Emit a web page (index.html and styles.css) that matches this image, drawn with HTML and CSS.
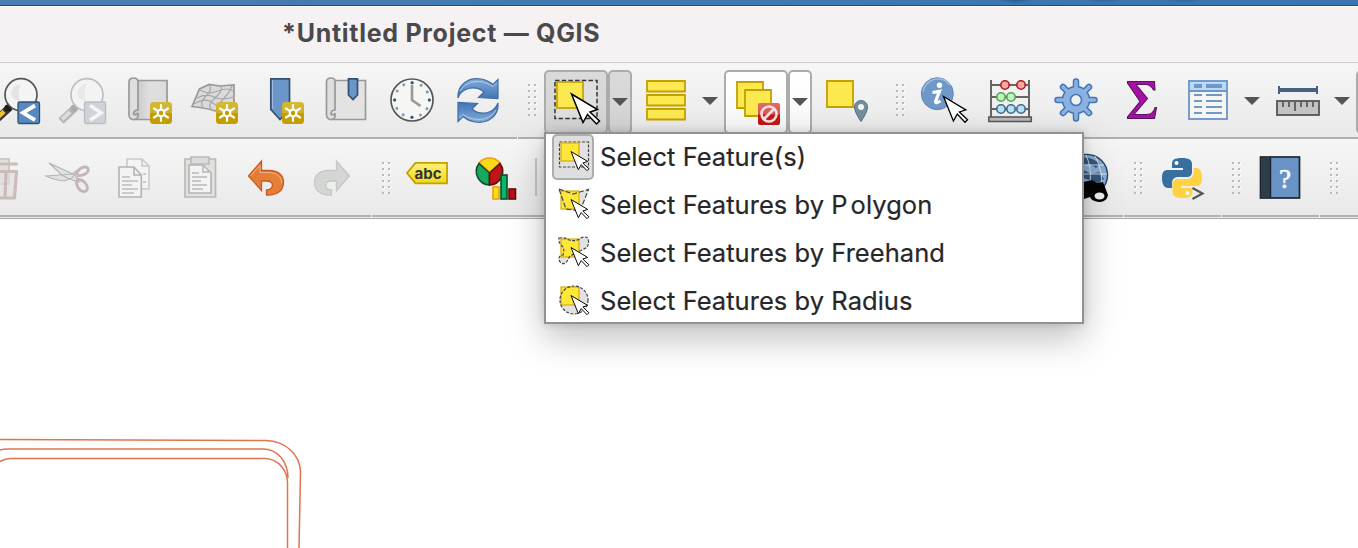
FILE: index.html
```html
<!DOCTYPE html>
<html lang="en">
<head>
<meta charset="utf-8">
<title>*Untitled Project — QGIS</title>
<link rel="stylesheet" href="styles.css">
</head>
<body>
<svg class="defs" width="0" height="0" aria-hidden="true">
  <defs>
    <linearGradient id="gold" x1="0" y1="0" x2="0" y2="1"><stop offset="0" stop-color="#d5b936"/><stop offset=".48" stop-color="#ceb02a"/><stop offset=".52" stop-color="#c29e00"/><stop offset="1" stop-color="#c29e00"/></linearGradient>
    <linearGradient id="red" x1="0" y1="0" x2="0" y2="1"><stop offset="0" stop-color="#e46a6a"/><stop offset=".48" stop-color="#dc5555"/><stop offset=".55" stop-color="#c81616"/><stop offset="1" stop-color="#c81616"/></linearGradient>
    <linearGradient id="blue" x1="0" y1="0" x2="0" y2="1"><stop offset="0" stop-color="#86abd5"/><stop offset="1" stop-color="#3f74b8"/></linearGradient>
    <linearGradient id="paper" x1="0" y1="0" x2="1" y2="0"><stop offset="0" stop-color="#c4c4c4"/><stop offset=".5" stop-color="#dfdfdf"/><stop offset="1" stop-color="#dcdcdc"/></linearGradient>
    <linearGradient id="orange" x1="0" y1="0" x2="1" y2="1"><stop offset="0" stop-color="#e07b35"/><stop offset="1" stop-color="#e8803a"/></linearGradient>
    <linearGradient id="tag" x1="0" y1="0" x2="0" y2="1"><stop offset="0" stop-color="#fdf27a"/><stop offset="1" stop-color="#f0da1c"/></linearGradient>
    <g id="cursor"><path d="M0 0 26 15.500 18.500 18 28 27 25 30 16 20.500 11.500 28.500Z" fill="#fff" stroke="#000" stroke-width="1.500"/></g>
    <g id="badge"><rect x="-11" y="-11" width="22" height="22" rx="3.500" fill="url(#gold)"/><g stroke="#fff" stroke-width="2.200" stroke-linecap="round"><path d="M0-8V8M-7-4.500 7 4.500M-7 4.500 7-4.500"/></g><circle r="3.300" fill="#c29e00" stroke="#fff" stroke-width="2.200"/></g>
    <g id="roll"><path d="M8 2.500H38.500V41.500H4" fill="url(#paper)" stroke="#999" stroke-width="1.700"/><path d="M.5 37V4Q.5 0 5 0T9.500 4V32Q5 32 5 36 8 38 9.500 35V38Q9 41.500 5 41.500T.5 37Z" fill="#dedede" stroke="#999" stroke-width="1.700"/></g>
  </defs>
</svg>

<div class="desktop"></div>
<header class="titlebar"><h1>*Untitled Project — QGIS</h1></header>

<nav class="toolbar first">
  <svg class="w49" viewBox="0 63 49 74">
    <path d="M10 107-3 119" stroke="#333" stroke-width="7.500"/><path d="M4 111.500-4 119" stroke="#f5bd2d" stroke-width="4.500"/><circle cx="8" cy="108" r="3.600" fill="#1c1c1c"/>
    <circle cx="21" cy="94.700" r="16" fill="#f4f4f4" stroke="#555" stroke-width="1.700"/><path d="M11 94a10 10 0 0 1 10-10q-4 7-1 17-7 0-9-7Z" fill="#e4e4e4"/>
    <rect x="18" y="102" width="21.500" height="21.500" rx="1.500" fill="#5888c1" stroke="#31506f" stroke-width="1.300"/><path d="M35 105.500 23 112.700 35 120.200" fill="none" stroke="#fff" stroke-width="3.800"/>
  </svg>
  <svg class="w66" viewBox="49 63 66 74">
    <path d="M76 107 61 121" stroke="#b5b5b5" stroke-width="7.500"/><path d="M70 112 62 119.500" stroke="#dfdcd5" stroke-width="4"/><circle cx="74" cy="108" r="3.200" fill="#aaa"/>
    <circle cx="87" cy="94.700" r="16" fill="#f3f3f3" stroke="#bebebe" stroke-width="1.700"/><path d="M77 94a10 10 0 0 1 10-10q-4 7-1 17-7 0-9-7Z" fill="#e8e8e8"/>
    <rect x="84.500" y="102" width="21" height="21.500" rx="1.500" fill="#ced3d9" stroke="#babec3" stroke-width="1.300"/><path d="M90 105.500 101 112.700 90 120.200" fill="none" stroke="#f5f5f5" stroke-width="3.800"/>
  </svg>
  <svg class="w66" viewBox="115 63 66 74"><use href="#roll" x="128.500" y="78"/><use href="#badge" x="161" y="113"/></svg>
  <svg class="w66" viewBox="181 63 66 74">
    <path d="M192 106.500 199.500 89 209 84.500 220 86 234 85V110L222 113Q208 108 192 106.500Z" fill="#dadada" stroke="#999" stroke-width="1.700"/>
    <path d="M197 98Q206 93 214 97T233 97M194 104Q206 97 213 103T226 106M200 90Q209 95 218 91T233 91M209 85Q213 89 206 96T203 107M221 86Q223 91 215 98T211 109M232 86Q230 92 224 98T221 110" fill="none" stroke="#a6a6a6" stroke-width="1.200"/>
    <use href="#badge" x="227" y="113"/>
  </svg>
  <svg class="w66" viewBox="247 63 66 74"><path d="M270.800 78.800H289.500V109.500L280 119.500 270.800 109.500Z" fill="#6b96c7" stroke="#33516f" stroke-width="1.700"/><path d="M272.500 80V109" stroke="#9dbbe0"/><use href="#badge" x="293" y="113"/></svg>
  <svg class="w66" viewBox="313 63 66 74"><path d="M335 80.500H365.500V119.500H330" fill="#e3e3e3" stroke="#999" stroke-width="1.700"/><path d="M326.500 115V82Q326.500 78 331 78T335 82V110Q331 110 331 114 334 116 335 113V116Q335 119.500 331 119.500T326.500 115Z" fill="#dedede" stroke="#999" stroke-width="1.700"/><path d="M348.500 78.800H357.500V95L353 99.500 348.500 95Z" fill="#6b96c7" stroke="#33516f" stroke-width="1.700"/></svg>
  <svg class="w66" viewBox="379 63 66 74">
    <circle cx="412" cy="100" r="21" fill="#f6f6f3" stroke="#555" stroke-width="1.700"/>
    <circle cx="412" cy="100" r="17.300" fill="none" stroke="#7b9ccb" stroke-width="3" stroke-linecap="round" stroke-dasharray=".01 9.048"/>
    <g fill="#36527c"><circle cx="412" cy="82.700" r="1.500"/><circle cx="429.300" cy="100" r="1.500"/><circle cx="412" cy="117.300" r="1.500"/><circle cx="394.700" cy="100" r="1.500"/></g>
    <path d="M412 85V100L420.500 106" fill="none" stroke="#999" stroke-width="2.600"/>
  </svg>
  <svg class="w66" viewBox="445 63 66 74">
    <g id="sync"><path d="M458 98C457 85 468 77 481 79 487 80 490 82 493 84.500L498 79.500V98.500L478.500 97.500 484 92C476 85 462 87 458 98Z" fill="url(#blue)" stroke="#3d6da8" stroke-width="1.200"/><path d="M460 91C466 81 480 78 493 86.500L496.500 83" fill="none" stroke="#b7cde8" stroke-width="1"/></g>
    <use href="#sync" transform="rotate(180 478 100.500)"/>
  </svg>
  <svg class="w33" viewBox="511 63 33 74"><g id="grip"><path d="M530 85V116M536 85V116" stroke="#fff" stroke-width="2" stroke-dasharray="2 4"/><path d="M529 84V116M535 84V116" stroke="#b9b9b9" stroke-width="2" stroke-dasharray="2 4"/></g></svg>

  <button class="tool pressed main"><svg viewBox="546 72 60 58">
    <rect x="555" y="79.500" width="42" height="38" fill="#dfdfdf" stroke="#333" stroke-width="1.500" stroke-dasharray="4.500 2.200"/><rect x="557" y="81" width="26" height="26" fill="#fce94f" stroke="#c4a000" stroke-width="1.700"/><use href="#cursor" x="571.500" y="93"/></svg></button>
  <button class="tool pressed drop"><i class="caret"></i></button>
  <svg class="w66" viewBox="632 63 66 74"><path d="M647 81H685V91.500H647ZM647 95H685V105.500H647ZM647 109H685V119.500H647Z" fill="#fce94f" stroke="#c4a000" stroke-width="1.800"/></svg>
  <span class="plain-drop near"><i class="caret"></i></span>
  <button class="tool main"><svg viewBox="726 72 60 58">
    <g fill="#fce94f" stroke="#c4a000" stroke-width="1.800"><path d="M737 81H763V107H737Z"/><path d="M745 89H771V115H745Z"/></g>
    <rect x="758" y="102" width="22" height="22" rx="2" fill="url(#red)"/><path d="M764 118 774 108" stroke="#fae3e3" stroke-width="2.800"/><circle cx="769" cy="113" r="7.500" fill="none" stroke="#fae3e3" stroke-width="2.600"/></svg></button>
  <button class="tool drop"><i class="caret"></i></button>
  <svg class="w66" viewBox="812 63 66 74"><path d="M827 81H853V107H827Z" fill="#fce94f" stroke="#c4a000" stroke-width="1.800"/><path d="M861 121.500Q854.500 112 854.500 107A6.500 6.500 0 0 1 867.500 107Q867.500 112 861 121.500Z" fill="#728f9e" stroke="#566f7c"/><circle cx="861" cy="107" r="3" fill="#f4f4f4"/></svg>
  <svg class="w32" viewBox="510 63 32 74"><use href="#grip"/></svg>
  <svg class="w66" viewBox="910 63 66 74">
    <circle cx="937.300" cy="93.700" r="16" fill="#6f98c9" stroke="#6089bb"/><path d="M923 92A15 15 0 0 1 950 85" fill="none" stroke="#a5c0e1" stroke-width="1.300"/>
    <circle cx="939.500" cy="85.300" r="2.700" fill="#fff"/><path d="M932.500 92.500 939.500 91.300 935.500 101.500Q935.500 104 940.500 101" fill="none" stroke="#fff" stroke-width="3.200"/>
    <use href="#cursor" transform="translate(943.500 96.500) scale(.86)"/>
  </svg>
  <svg class="w66" viewBox="976 63 66 74">
    <path d="M991 80V117M1029 80V117M991 85H1029M991 97H1029M991 109H1029" stroke="#666" stroke-width="2"/><rect x="988.800" y="117" width="42.500" height="4.500" fill="#b9b9b9" stroke="#555" stroke-width="1.500"/>
    <g stroke-width="1.600"><g fill="#ffa6a6" stroke="#b01c1c"><circle cx="1005" cy="85" r="4.200"/><circle cx="1021" cy="85" r="4.200"/></g><g fill="#bdf5bd" stroke="#55a055"><circle cx="1001" cy="97" r="4.200"/><circle cx="1011" cy="97" r="4.200"/></g><g fill="#b9e2fa" stroke="#3f6a86"><circle cx="1001" cy="109" r="4.200"/><circle cx="1011" cy="109" r="4.200"/><circle cx="1021" cy="109" r="4.200"/></g></g>
  </svg>
  <svg class="w66" viewBox="1042 63 66 74"><g transform="translate(1076 100)">
    <path d="M0-18.500V18.500M-18.500 0H18.500M-13-13 13 13M-13 13 13-13" stroke="#3f76bc" stroke-width="6.500" stroke-linecap="round"/><circle r="13.500" fill="#8db1de" stroke="#3f76bc" stroke-width="1.600"/>
    <path d="M0-18.500V18.500M-18.500 0H18.500M-13-13 13 13M-13 13 13-13" stroke="#8db1de" stroke-width="3.600" stroke-linecap="round"/><circle r="5.500" fill="#f1f1f1" stroke="#3f76bc" stroke-width="1.600"/></g></svg>
  <svg class="w66" viewBox="1108 63 66 74"><path d="M1127.500 81.500H1154.500L1155 90H1153.500Q1151 84.500 1145 84.500H1136L1147.500 98.500 1134 114.500H1147Q1153.500 114 1155 107.500H1156.500L1154.500 118.500H1127.500V117L1140 101.500 1127.500 83Z" fill="#a70fa7" stroke="#55165a" stroke-width="1.100"/></svg>
  <svg class="w66" viewBox="1174 63 66 74"><rect x="1189" y="81" width="38" height="38" fill="#f5f5f3" stroke="#6f98c9" stroke-width="1.900"/><path d="M1190 82H1226V90H1190Z" fill="#b9dcf4"/><path d="M1189 91H1227M1194 95H1202M1206 95H1222M1194 101H1202M1206 101H1222M1194 107H1202M1206 107H1222M1194 113H1202M1206 113H1222" stroke="#6f98c9" stroke-width="1.800"/><path d="M1194 86H1202M1206 86H1222" stroke="#6f98c9" stroke-width="4"/></svg>
  <span class="plain-drop wide"><i class="caret"></i></span>
  <svg class="w66" viewBox="1264 63 66 74"><path d="M1278 90H1318" stroke="#46617f" stroke-width="4"/><path d="M1279 86V94M1317 86V94" stroke="#46617f" stroke-width="2"/><rect x="1277" y="101" width="42" height="14" fill="#c3c3c3" stroke="#555" stroke-width="1.800"/><path d="M1283 102V107M1289 102V107M1295 102V111M1301 102V107M1307 102V107M1313 102V107" stroke="#555" stroke-width="1.700"/></svg>
  <span class="plain-drop wide"><i class="caret"></i></span>
  <button class="tool main edge"></button>
</nav>

<nav class="toolbar second">
  <svg class="w35" viewBox="0 140 35 74"><path d="M-4 159H9V184H-4Z" fill="#e2deda" stroke="#cfc8c3" stroke-width="2"/><path d="M-4 171.500H16.500L14.500 198H-4Z" fill="#e6dede" fill-opacity=".6"/><path d="M-6 164H16.500M-4 171.500H16.500L14.500 198H-4M6 172 5 197" fill="none" stroke="#cbbbbb" stroke-width="3.200" stroke-linecap="round" stroke-linejoin="round"/></svg>
  <svg class="w66" viewBox="35 140 66 74"><g stroke="#b5b5b5" stroke-width="1.100" fill="#e2e2e2"><path d="M49 163 75 175 79 182Q68 179 62 175ZM46 176 72 174 79 169 72 178 64 181Q54 180 46 176Z"/></g><g fill="none" stroke="#c4b6b6" stroke-width="2.800"><path d="M76 175Q79 167 85 167C91 167 89 176 77 175.500"/><path d="M76 180Q77 190 83 191.500C91 192 88 180 76 179"/></g></svg>
  <svg class="w66" viewBox="101 140 66 74"><g fill="#f3f3f3" stroke="#cacaca" stroke-width="1.600"><path d="M127 159H142L149 166V189H127ZM142 159V166H149"/><path d="M119 167H134L141.300 175V197H119ZM134 167V175H141" stroke="#b3b3b3"/><path d="M122 177H130M122 181H138M122 185H132M122 189H138M122 193H134M143 174H146M143 182H146" stroke="#bdbdbd"/></g></svg>
  <svg class="w66" viewBox="167 140 66 74"><path d="M185 159H215.500V197H185Z" fill="#e2e1de" stroke="#b9b9b5" stroke-width="1.700"/><path d="M189 165H203L211 173V193H189Z" fill="#f3f3f3" stroke="#b5b5b5" stroke-width="1.700"/><path d="M203 165V172H211M192 173H199M192 177H207M192 181H201M192 185H207M192 189H203" fill="none" stroke="#b9b9b9" stroke-width="1.600"/><path d="M191 157H209V164H191Z" fill="#dcdcdc" stroke="#b9b9b9" stroke-width="1.500"/></svg>
  <svg class="w66" viewBox="233 140 66 74"><path d="M248.500 176 261.500 161V170.500H269C279 170.500 283.500 176 283.500 182 283.500 191 277 195.500 266.500 195V190C273 190 275.500 181.500 267 181H261.500V190.500Z" fill="url(#orange)" stroke="#c75a20" stroke-width="1.300"/><path d="M250.500 176 260 165V172.500H269C277 173 282 177 281.500 183" fill="none" stroke="#f2b489" stroke-width="1"/></svg>
  <svg class="w66" viewBox="299 140 66 74"><path d="M349.500 176 336.500 161V170.500H329C319 170.500 314.500 176 314.500 182 314.500 191 321 195.500 331.500 195V190C325 190 322.500 181.500 331 181H336.500V190.500Z" fill="#d4d6d4" stroke="#c5c8c5" stroke-width="1.300"/></svg>
  <svg class="w29" viewBox="511 62 29 74"><use href="#grip"/></svg>
  <svg class="w66" viewBox="394 140 66 74"><path d="M407 173 415.500 162.800H447V183.300H415.500Z" fill="url(#tag)" stroke="#c4a000" stroke-width="1.800"/><text x="414.500" y="178.500" class="tag-text" textLength="27">abc</text></svg>
  <svg class="w69" viewBox="460 140 69 74"><g stroke-width="1.600"><path d="M489.500 172 479 163A13.500 13.500 0 0 1 500 163Z" fill="#fdd81a" stroke="#f0a010"/><path d="M489.500 173 479 163.500A13.500 13.500 0 0 0 489.500 185Z" fill="#16a85c" stroke="#174d30"/><path d="M489.500 173 500 163.500A13.500 13.500 0 0 1 489.500 185Z" fill="#c11414" stroke="#5d1111"/><rect x="493" y="187" width="6" height="12" fill="#fbe014" stroke="#f29c12"/><rect x="509" y="189" width="6.500" height="10" fill="#bb1010" stroke="#5d1111"/><rect x="501" y="175" width="6" height="24" fill="#08b864" stroke="#0c4c30"/></g></svg>
  <i class="rule"></i>
  <span class="fill"></span>
  <svg class="w37" viewBox="1083 140 37 74"><circle cx="1087" cy="175" r="20.500" fill="#8aaed6" stroke="#294766" stroke-width="1.500"/><path d="M1083 157Q1094 158 1100 164L1096 168 1090 164 1083 165ZM1083 170 1092 174 1099 172 1104 179 1098 183 1083 178Z" fill="#36577b"/><path d="M1083 165H1104M1083 174H1107M1095 156Q1104 173 1101 188M1086 155Q1092 168 1090 183" fill="none" stroke="#dde9f4" stroke-width=".9"/><path d="M1078 183 1088 181 1092 180 1097 183 1103 182 1108 195Q1107 202 1099 202 1091 201 1090 197L1084 199H1078Z" fill="#050505"/><ellipse cx="1099.500" cy="196" rx="6" ry="4.500" fill="#f2f2f2" stroke="#000" stroke-width="2"/></svg>
  <svg class="w32" viewBox="514 62 32 74"><use href="#grip"/></svg>
  <svg class="w66" viewBox="1152 140 66 74"><path d="M1182 158C1174 158 1172 160 1172 164V168H1183V170H1167C1163 170 1162 174 1162 178 1162 184 1164 188 1168 188H1172V183C1172 179 1175 177 1178 177H1187C1190 177 1192 175 1192 172V164C1192 160 1189 158 1182 158Z" fill="#376f9f"/><circle cx="1176.500" cy="163" r="2" fill="#fff"/><path d="M1182.500 198C1190 198 1192.500 196 1192.500 192V188H1181V186H1197.500C1201 186 1202 182 1202 178 1202 172 1200 168 1196.500 168H1193.500V173C1193.500 177 1190 179 1187 179H1178C1175 179 1172.500 181 1172.500 184V192C1172.500 196 1176 198 1182.500 198Z" fill="#ffd241"/><circle cx="1187.500" cy="193" r="2" fill="#fff"/><path d="M1192.500 188 1202.500 193.500 1192.500 199" fill="none" stroke="#555" stroke-width="2.200"/></svg>
  <svg class="w32" viewBox="514 62 32 74"><use href="#grip"/></svg>
  <svg class="w66" viewBox="1250 140 66 74"><rect x="1260.500" y="157" width="39" height="41" fill="#6893c6" stroke="#20242d" stroke-width="1.700"/><path d="M1261 158H1270V197H1261Z" fill="#2e3d4b"/><path d="M1270.500 157V198" stroke="#20242d" stroke-width="1.500"/><text x="1285" y="188" class="help-text" text-anchor="middle">?</text></svg>
  <svg class="w32" viewBox="514 62 32 74"><use href="#grip"/></svg>
</nav>

<main class="canvas">
  <svg viewBox="0 219 320 329" class="drawing"><g fill="none" stroke="#e07450" stroke-width="1.500"><path d="M0 439.500 266 440.500C286 441 300 455 300.500 472L299 548"/><path d="M0 450Q3 449 8 449H263C278 449 288 462 288 478"/><path d="M0 461.500Q4 459 10 458.500H265C279 459 287.500 471 287.500 483V548"/></g></svg>
</main>

<div class="menu" role="menu">
  <ul>
    <li class="current"><span class="glyph"><svg viewBox="554 136 38 42"><rect x="559.500" y="142" width="29" height="25" fill="#e2e2e2" stroke="#444" stroke-width="1.200" stroke-dasharray="3 1.500"/><rect x="561" y="143" width="18" height="18" fill="#ffe739" stroke="#d2ae10" stroke-width="1.200"/><use href="#cursor" transform="translate(571 151.500) scale(.64)"/></svg></span><b>Select Feature(s)</b></li>
    <li><span class="glyph"><svg viewBox="554 136 38 42"><path d="M559 141 573 147 588.500 141.500 580 164 566 161Z" fill="#e2e2e2"/><rect x="561" y="143" width="18" height="18" fill="#ffe739" stroke="#d2ae10" stroke-width="1.200"/><path d="M559 141 573 146 588.500 141.500 580 163 566 161Z" fill="none" stroke="#444" stroke-width="1.200" stroke-dasharray="5 2"/><use href="#cursor" transform="translate(571 151.500) scale(.64)"/></svg></span><b>Select Features by <span class="pp">P</span>olygon</b></li>
    <li><span class="glyph"><svg viewBox="554 136 38 42"><path d="M559 142Q565 141 569 144 576 146 581 142 588 139 588.500 145 589 151 584 153L570 160 566 167Q561 169 559 164 558 160 563 159 565 153 562 150 558 146 559 142Z" fill="#e2e2e2"/><rect x="561" y="143" width="18" height="18" fill="#ffe739" stroke="#d2ae10" stroke-width="1.200"/><path d="M559 142Q565 141 569 144 576 146 581 142 588 139 588.500 145 589 151 584 153L570 160 566 167Q561 169 559 164 558 160 563 159 565 153 562 150 558 146 559 142Z" fill="none" stroke="#444" stroke-width="1.200" stroke-dasharray="3 1.500"/><use href="#cursor" transform="translate(571 151.500) scale(.64)"/></svg></span><b>Select Features by Freehand</b></li>
    <li><span class="glyph"><svg viewBox="554 136 38 42"><circle cx="574" cy="156" r="14" fill="#e2e2e2"/><rect x="561" y="143" width="18" height="18" fill="#ffe739" stroke="#d2ae10" stroke-width="1.200"/><circle cx="574" cy="156" r="14" fill="none" stroke="#444" stroke-width="1.200" stroke-dasharray="3 1.500"/><use href="#cursor" transform="translate(571 151.500) scale(.64)"/></svg></span><b>Select Features by Radius</b></li>
  </ul>
</div>
</body>
</html>
```

FILE: styles.css
```css
* { box-sizing: border-box; }
body { margin: 0; width: 1358px; height: 548px; overflow: hidden; position: relative; background: #fff; font-family: Inter, "Liberation Sans", sans-serif; }
svg { display: block; flex: none; }
.defs { position: absolute; }
.desktop { height: 6px; border-bottom: 1px solid #2b4a72; background:
  radial-gradient(ellipse 17px 5px at 1015px -1px, #24568d, transparent),
  radial-gradient(ellipse 20px 4px at 1103px -1px, #2e6096, transparent),
  radial-gradient(ellipse 20px 4px at 1183px -1px, #2e6096, transparent),
  linear-gradient(90deg, #4b7db2, #3875b2); }
.titlebar { height: 57px; background: #f6f2f3; border-bottom: 1px solid #d2cfcf; border-top: 1px solid #fff; }
.titlebar h1 { margin: 0; padding: 10px 0 0 282px; font-size: 25px; line-height: 32px; font-weight: 700; color: #4b494a; letter-spacing: .71px; white-space: nowrap; }
.toolbar { display: flex; align-items: stretch; overflow: hidden; }
.toolbar > svg { height: 74px; }
.first { height: 76px; background:
  linear-gradient(#f4f4f4, #f4f4f4) 517px 74px / 1px 2px no-repeat,
  linear-gradient(#f6f6f6, #e9e9e9 74px, #afafaf 74px); }
.second { height: 80px; padding-top: 1px; background:
  linear-gradient(#f4f4f4, #f4f4f4) 371px 76px / 1px 2px no-repeat,
  linear-gradient(#f4f4f4, #f4f4f4) 1123px 76px / 1px 2px no-repeat,
  linear-gradient(#f4f4f4, #f4f4f4) 1221px 76px / 1px 2px no-repeat,
  linear-gradient(#f4f4f4, #f4f4f4) 1319px 76px / 1px 2px no-repeat,
  linear-gradient(#f6f6f6, #e9e9e9 76px, #b1b1b1 76px, #b1b1b1 78px, #ededed 78px, #ededed 79px, #a9a9a9 79px); }
.w29 { width: 29px; } .w32 { width: 32px; } .w33 { width: 33px; } .w35 { width: 35px; } .w37 { width: 37px; }
.w49 { width: 49px; } .w66 { width: 66px; } .w69 { width: 69px; }
.tool { flex: none; display: grid; place-items: center; margin: 7px 0 5px; padding: 0; border: 2px solid #acacac; border-radius: 5px; background: linear-gradient(#fff, #f8f8f8); }
.tool.main { width: 64px; }
.tool.main svg { width: 60px; height: 58px; }
.tool.drop { width: 24px; }
.tool.pressed { background: linear-gradient(#dadada, #d3d3d3); }
.tool.edge { margin-left: 2px; }
.caret { display: block; width: 16px; height: 8px; background: #555; clip-path: polygon(0 0, 100% 0, 50% 100%); }
.plain-drop { flex: none; width: 26px; display: grid; place-items: center; }
.plain-drop.near { padding-right: 2px; }
.plain-drop.wide { width: 24px; }
.rule { flex: none; width: 2px; height: 38px; margin: 18px 0 0 6px; background: #c6c6c6; }
.fill { flex: none; width: 546px; }
.tag-text { font: 700 15px Inter, sans-serif; fill: #333; }
.help-text { font: 27px "Liberation Serif", serif; fill: #fff; stroke: #fff; stroke-width: .5px; }
.canvas { height: 329px; background: #fff; }
.drawing { width: 320px; height: 329px; }
.menu { position: absolute; left: 544px; top: 132px; width: 540px; height: 192px; border: 2px solid #929292; background: #fff; box-shadow: 0 14px 34px rgba(0, 0, 0, .25), 0 0 8px rgba(0, 0, 0, .14); }
.menu ul { list-style: none; margin: -1px 0 0; padding: 0 0 0 6px; }
.menu li { height: 48px; display: flex; align-items: center; gap: 6px; font-size: 25.5px; color: #272727; white-space: nowrap; }
.menu b { font-weight: 400; letter-spacing: .04px; margin-top: -2px; -webkit-text-stroke: .2px #272727; }
.menu .pp { letter-spacing: 3px; }
.glyph { width: 42px; height: 46px; border: 2px solid transparent; border-radius: 5px; }
.glyph svg { width: 38px; height: 42px; }
.current .glyph { background: #dedede; border-color: #adadad; }
```
